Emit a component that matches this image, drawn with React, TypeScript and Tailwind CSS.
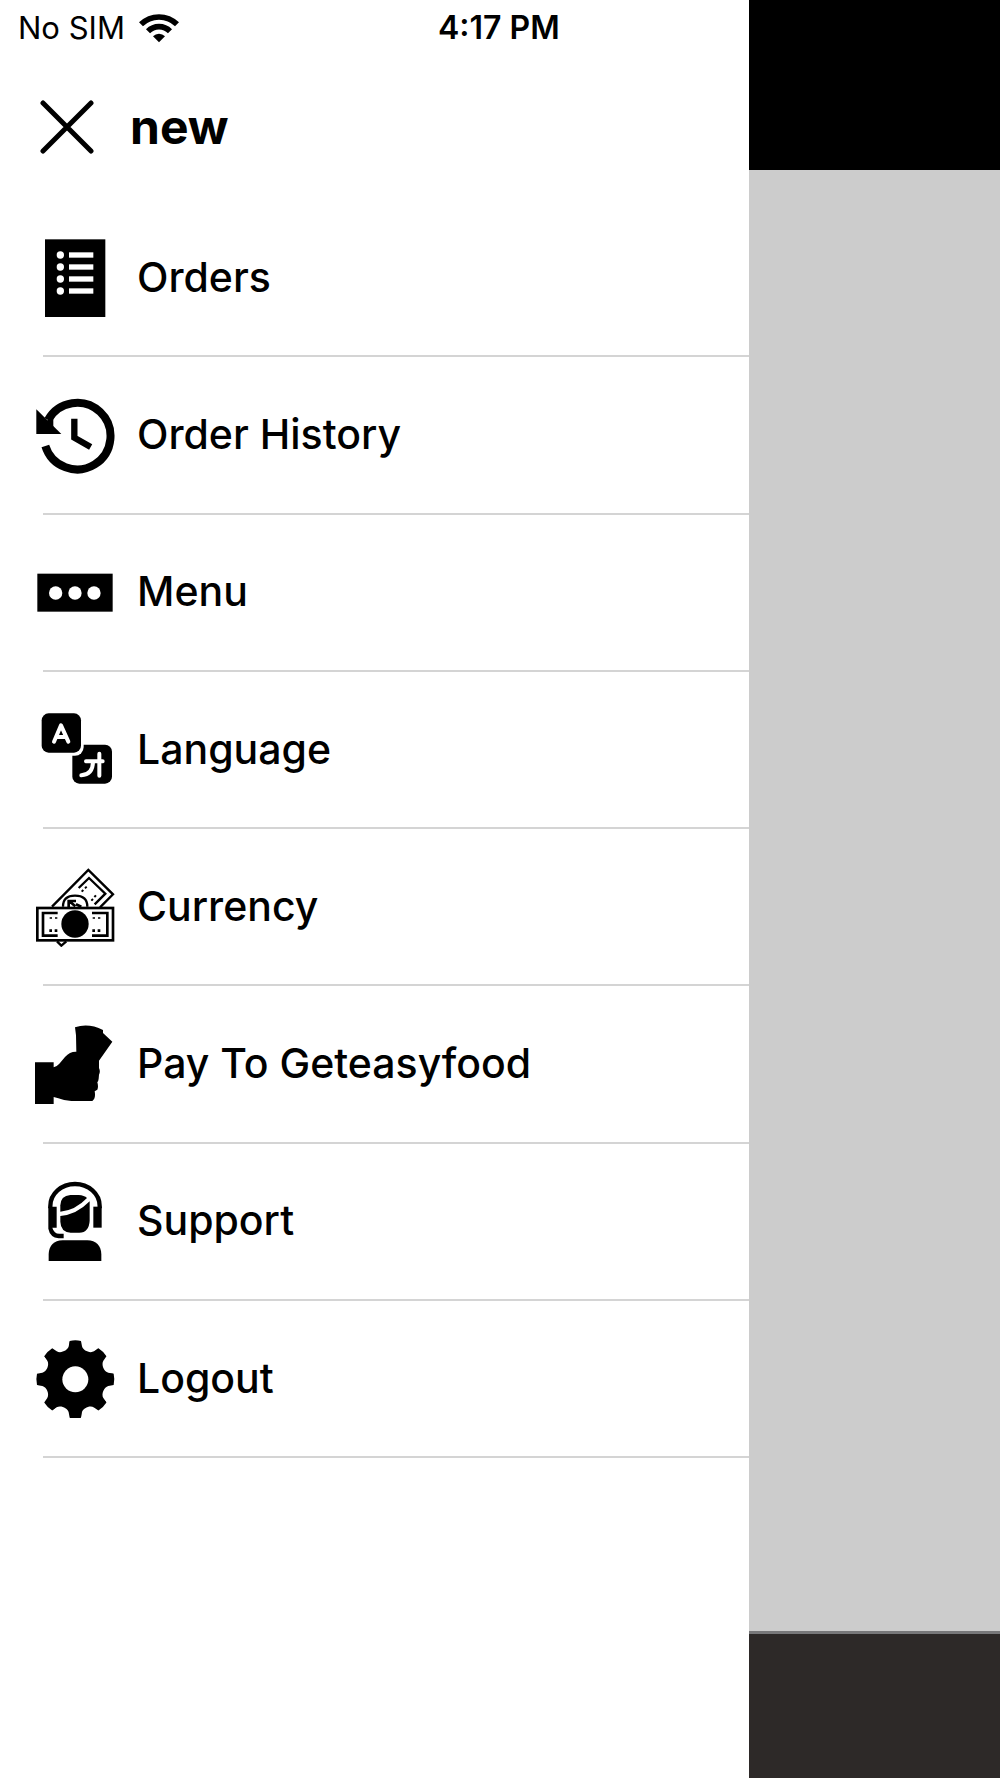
import type { ReactNode } from "react";

function Icon({ box, children }: { box: string; children: ReactNode }) {
  return (
    <svg viewBox={box} className="size-20 shrink-0" aria-hidden="true">
      {children}
    </svg>
  );
}

function OrdersIcon() {
  return (
    <Icon box="45 54 240 240">
      <rect x="75" y="58" width="181" height="233" />
      {[105, 141, 177, 213].map((y) => (
        <g key={y} fill="#fff">
          <circle cx="121" cy={y} r="11" />
          <rect x="147" y={y - 8} width="73" height="16" />
        </g>
      ))}
    </Icon>
  );
}

function HistoryIcon() {
  return (
    <Icon box="45 44 240 240">
      <path d="M76 197A100 100 0 1 0 84 119" fill="none" stroke="#000" strokeWidth="24" />
      <path d="M49 87L124 161H49Z" />
      <path d="M84 119L100 106V140H60Z" />
      <path d="M163 115V172L212 200" fill="none" stroke="#000" strokeWidth="19" />
    </Icon>
  );
}

function MenuIcon() {
  return (
    <Icon box="45 -22 240 240">
      <rect x="52" y="43" width="226" height="114" />
      <g fill="#fff">
        <circle cx="107" cy="101" r="20" />
        <circle cx="165" cy="101" r="20" />
        <circle cx="222" cy="101" r="20" />
      </g>
    </Icon>
  );
}

function LanguageIcon() {
  return (
    <Icon box="45 27 240 240">
      <rect x="157" y="134" width="119" height="117" rx="21" />
      <rect x="60" y="35" width="131" height="132" rx="26" fill="#fff" />
      <rect x="65" y="40" width="118" height="118" rx="21" />
      <g fill="none" stroke="#fff" strokeLinecap="round" strokeLinejoin="round">
        <path d="M102 125L123 76L145 125M110 111H137" strokeWidth="12" />
        <path d="M198 184H248M238 161V227M219 186Q218 224 184 226" strokeWidth="12" />
      </g>
    </Icon>
  );
}

function CurrencyIcon() {
  return (
    <Icon box="45 20 240 240">
      <g fill="none" stroke="#000" strokeWidth="7">
        <path d="M96 139L205 29L279 102L240 141" />
        <path d="M111 243L124 256L139 243" />
        <path d="M176 83L207 53L256 100L224 132" />
        <path d="M129 139Q129 106 165 106Q202 106 202 139" />
        <path d="M146 140V122H168M150 124L166 138M168 132L184 139" strokeWidth="8" />
        <path d="M185 94L190 89M195 84L200 79M214 121L219 116M223 110L228 105" strokeWidth="6" />
      </g>
      <rect x="52" y="143" width="227" height="97" fill="#fff" stroke="#000" strokeWidth="8" />
      <path
        d="M113 158H69V226H113M216 158H262V226H216"
        fill="none"
        stroke="#000"
        strokeWidth="8"
      />
      <path
        d="M89 173H96M105 173H112M218 173H225M234 173H241"
        stroke="#000"
        strokeWidth="5"
      />
      <path
        d="M88 211H96M104 211H112M217 211H225M233 211H241"
        stroke="#000"
        strokeWidth="8"
      />
      <circle cx="165" cy="191" r="41" />
    </Icon>
  );
}

function PayIcon() {
  return (
    <Icon box="45 41 240 240">
      <path d="M45 156H101V171Q110 169 118 160L135 140Q150 123 169 124L168 75L165 51Q205 37 249 59V68L277 94L237 151V173Q242 183 237 193L236 205Q235 213 232 216Q236 229 232 238L224 243Q228 264 217 272H154Q130 270 115 264L101 260V285H45Z" />
    </Icon>
  );
}

function SupportIcon() {
  return (
    <Icon box="45 33 240 240">
      <path
        d="M91 115V108A74 66 0 0 1 239 108V115"
        fill="none"
        stroke="#000"
        strokeWidth="13"
      />
      <path d="M85 110H110V173H97Q102 191 118 191H131V205H116Q90 202 85 176Z" />
      <rect x="220" y="110" width="25" height="63" />
      <path d="M121 125V106Q122 77 151 75H176Q193 76 201 84Q166 121 121 125Z" />
      <path d="M121 138Q170 134 209 94V152Q207 187 178 188H152Q122 186 121 155Z" />
      <path d="M86 276V252Q88 213 128 211H202Q242 213 244 252V276Z" />
    </Icon>
  );
}

function GearIcon() {
  return (
    <Icon box="46 25 240 240">
      <g transform="translate(167 149)">
        {[0, 45, 90, 135, 180, 225, 270, 315].map((angle) => (
          <path
            key={angle}
            transform={`rotate(${angle})`}
            d="M-5 5L-5 -60L-18 -98L-17 -115Q0 -119 17 -115L20 -99C23 -86 44 -77 56 -84L69 -93L60 -60L5 5Z"
          />
        ))}
        <circle r="39" fill="#fff" />
      </g>
    </Icon>
  );
}

function WifiIcon() {
  return (
    <svg viewBox="415 36 120 90" className="h-[30px] w-10" aria-label="Wi-Fi">
      <g fill="none" stroke="#000" strokeWidth="17">
        <path d="M421 70A77 77 0 0 1 529 70" />
        <path d="M442 91A46 46 0 0 1 508 91" />
      </g>
      <path d="M475 124L457 106A25 25 0 0 1 493 106Z" />
    </svg>
  );
}

const items = [
  { label: "Orders", icon: <OrdersIcon /> },
  { label: "Order History", icon: <HistoryIcon /> },
  { label: "Menu", icon: <MenuIcon /> },
  { label: "Language", icon: <LanguageIcon /> },
  { label: "Currency", icon: <CurrencyIcon /> },
  { label: "Pay To Geteasyfood", icon: <PayIcon /> },
  { label: "Support", icon: <SupportIcon /> },
  { label: "Logout", icon: <GearIcon /> },
];

export default function App() {
  return (
    <div className="flex min-h-screen bg-white font-['Inter',sans-serif] text-black">
      <aside className="w-[74.9%] shrink-0">
        <div className="flex h-14 items-center pl-[18px] text-[31px]">
          <div className="flex w-[420px] items-center gap-3.5">
            <span>No SIM</span>
            <WifiIcon />
          </div>
          <time className="text-[32px] font-semibold whitespace-nowrap">4:17 PM</time>
        </div>

        <header className="flex h-36 items-center gap-9 pb-0.5 pl-10">
          <button type="button" aria-label="Close menu">
            <svg viewBox="0 0 54 54" className="size-[54px]" aria-hidden="true">
              <path d="M3 3L51 51M51 3L3 51" stroke="#000" strokeWidth="5" strokeLinecap="round" />
            </svg>
          </button>
          <h1 className="text-[48px] font-bold">new</h1>
        </header>

        <nav aria-label="Main">
          <ul className="grid min-h-[1258px] auto-rows-fr">
            {items.map((item) => (
              <li key={item.label} className="flex flex-col">
                <a href="#" className="flex flex-1 items-center gap-[22px] pl-[35px] text-[41px] font-medium">
                  {item.icon}
                  <span>{item.label}</span>
                </a>
                <div className="ml-[43px] h-0.5 bg-[#d4d4d4]" />
              </li>
            ))}
          </ul>
        </nav>
      </aside>

      <div className="flex flex-1 flex-col bg-[#cccccc]">
        <div className="h-[170px] bg-black" />
        <div className="flex-1" />
        <div className="h-[147px] border-t-[3px] border-[#78787a] bg-[#2d2928]" />
      </div>
    </div>
  );
}
